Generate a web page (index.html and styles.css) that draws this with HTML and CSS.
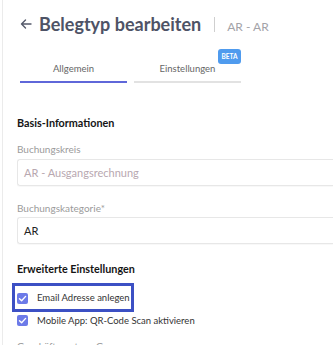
FILE: index.html
```html
<html>
    <head>
        <title>Belegtyp bearbeiten</title>
        <link rel="stylesheet" href="styles.css">
    </head>
    <body>
        <div class="page">
            <div class="head">
                <svg class="back" width="12" height="10" viewBox="0 0 12 10"><path d="M11 5 H1.5 M5.5 1 L1.5 5 L5.5 9" fill="none" stroke="#555a6b" stroke-width="1.4" stroke-linecap="round" stroke-linejoin="round"/></svg>
                <h1>Belegtyp bearbeiten</h1>
                <span class="sep"></span>
                <span class="sub">AR - AR</span>
            </div>
            <div class="tabs">
                <div class="tab active">Allgemein</div>
                <div class="tab">Einstellungen<span class="beta">BETA</span></div>
            </div>

            <h2>Basis-Informationen</h2>
            <label>Buchungskreis</label>
            <div class="input disabled">AR - Ausgangsrechnung</div>
            <label class="second">Buchungskategorie*</label>
            <div class="input">AR</div>

            <h2 class="second">Erweiterte Einstellungen</h2>
            <div class="checks">
                <div class="check marked">
                    <span class="box"><svg width="11" height="11" viewBox="0 0 11 11"><path d="M2.5 5.8 L4.6 7.8 L8.6 3.4" fill="none" stroke="#fff" stroke-width="1.4" stroke-linecap="round" stroke-linejoin="round"/></svg></span>
                    Email Adresse anlegen
                </div>
                <div class="check">
                    <span class="box"><svg width="11" height="11" viewBox="0 0 11 11"><path d="M2.5 5.8 L4.6 7.8 L8.6 3.4" fill="none" stroke="#fff" stroke-width="1.4" stroke-linecap="round" stroke-linejoin="round"/></svg></span>
                    Mobile App: QR-Code Scan aktivieren
                </div>
            </div>
            <label class="cut">Geschäftspartner-Gruppe</label>
        </div>
    </body>
</html>
```
FILE: styles.css
```css
body {
    margin: 0;
    background: #fff;
    font-family: Lato, "Open Sans", sans-serif;
    overflow: hidden;
}
.page {
    margin-left: 2px;
    border-left: 1px solid #ebebeb;
    padding: 13px 0 0 14px;
    height: 345px;
    box-sizing: border-box;
}
.head {
    display: flex;
    align-items: baseline;
    height: 22px;
    line-height: 22px;
}
.back {
    align-self: center;
    margin: 0 7px 0 3px;
}
.head h1 {
    margin: 0;
    font-size: 18px;
    font-weight: bold;
    color: #4e5366;
}
.sep {
    align-self: center;
    width: 1px;
    height: 15px;
    background: #cfcfcf;
    margin: 0 12px 0 13px;
}
.sub {
    color: #a3a3a8;
    font-size: 12px;
}
.tabs {
    display: flex;
    gap: 7px;
    margin: 28px 0 0 3px;
}
.tab {
    position: relative;
    width: 107px;
    text-align: center;
    font-size: 9.5px;
    line-height: 12px;
    color: #666;
    padding-bottom: 6px;
    border-bottom: 2px solid #e2e2e2;
}
.tab.active {
    border-bottom-color: #5f67d9;
}
.beta {
    position: absolute;
    top: -14px;
    right: 0;
    width: 23px;
    height: 15px;
    display: flex;
    align-items: center;
    justify-content: center;
    background: #4f9bee;
    color: #fff;
    font-size: 6.5px;
    font-weight: bold;
    border-radius: 3px;
}
h2 {
    margin: 33px 0 0 0;
    font-size: 10.8px;
    line-height: 13px;
    font-weight: bold;
    color: #151515;
}
h2.second {
    margin-top: 18px;
}
label {
    display: block;
    margin-top: 14px;
    font-size: 10px;
    line-height: 12px;
    color: #9b9b9b;
}
label.second {
    margin-top: 16px;
}
.input {
    margin-top: 4px;
    height: 25px;
    border: 1px solid #e7e7e7;
    border-right: none;
    border-radius: 3px 0 0 3px;
    box-shadow: 0 1px 1px rgba(0, 0, 0, 0.03);
    padding-left: 6px;
    font-size: 11px;
    line-height: 25px;
    color: #222;
}
label.second + .input {
    margin-top: 3px;
}
.input.disabled {
    color: #b8a8b0;
}
.checks {
    margin-top: 8px;
}
.check {
    display: flex;
    align-items: center;
    font-size: 9.5px;
    line-height: 12px;
    color: #333;
    height: 17px;
    white-space: nowrap;
}
.check.marked {
    box-sizing: border-box;
    margin-left: -5px;
    width: 122px;
    height: 29px;
    padding: 1px 0 0 2px;
    border: 3px solid #3c50c4;
}
.box {
    width: 11px;
    height: 11px;
    background: #6c7ae8;
    border-radius: 2px;
    margin-right: 9px;
    display: flex;
}
.cut {
    margin-top: 11px;
}
```
